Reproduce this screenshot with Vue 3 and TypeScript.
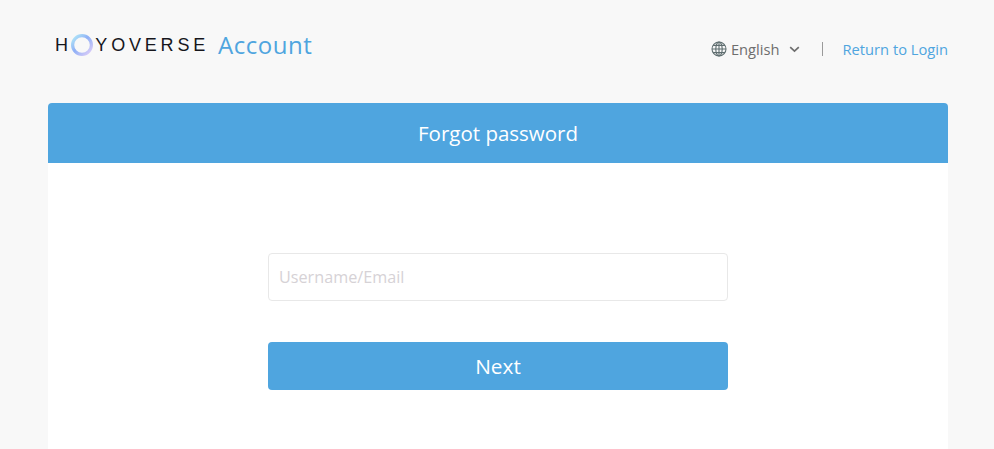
<script setup lang="ts">
const title: string = 'Forgot password'
</script>

<template>
  <div class="page">
    <header class="top">
      <div class="brand">
        <div class="logo" aria-label="HoYoverse">
          <span class="h">H</span>
          <svg class="ring" width="24" height="24" viewBox="0 0 24 24">
            <defs>
              <linearGradient id="ringGrad" x1="0" y1="0" x2="1" y2="1">
                <stop offset="0" stop-color="#b4ecf8" />
                <stop offset="0.45" stop-color="#8fb0f6" />
                <stop offset="1" stop-color="#e2cff8" />
              </linearGradient>
            </defs>
            <circle cx="12" cy="12" r="9.4" fill="none" stroke="url(#ringGrad)" stroke-width="3.2" />
          </svg>
          <span class="rest">YOVERSE</span>
        </div>
        <span class="account">Account</span>
      </div>
      <nav class="nav">
        <svg class="globe" width="16" height="16" viewBox="0 0 16 16" fill="none" stroke="#5f6e70" stroke-width="1.1">
          <circle cx="8" cy="8" r="7" />
          <ellipse cx="8" cy="8" rx="3.2" ry="7" />
          <path d="M8 1v14M1 8h14M2 4.4h12M2 11.6h12" />
        </svg>
        <span class="lang">English</span>
        <svg class="chev" width="11" height="7" viewBox="0 0 11 7" fill="none" stroke="#6e6e6e" stroke-width="1.7">
          <path d="M1.2 1.2l4.3 4 4.3-4" />
        </svg>
        <span class="sep"></span>
        <a class="link">Return to Login</a>
      </nav>
    </header>
    <main class="card">
      <h1 class="head">{{ title }}</h1>
      <form class="form" @submit.prevent>
        <input class="input" type="text" placeholder="Username/Email" />
        <button class="next" type="submit">Next</button>
      </form>
    </main>
  </div>
</template>

<style>
html, body { margin: 0; background: #f8f8f8; overflow: hidden; }
</style>

<style scoped>
.page {
  height: 449px;
  box-sizing: border-box;
  padding: 0 46px 0 48px;
  background: #f8f8f8;
  font-family: "Open Sans", "Noto Sans", sans-serif;
  overflow: hidden;
}
.top {
  height: 103px;
  display: flex;
  justify-content: space-between;
}
.brand {
  display: flex;
  align-items: center;
  height: 90px;
  padding-left: 7px;
}
.logo {
  display: flex;
  align-items: center;
  width: 154px;
  font-family: "Liberation Sans", sans-serif;
  font-size: 18px;
  font-weight: 400;
  color: #16161c;
}
.h { width: 17px; }
.ring { margin: 0 1px 0 0; flex: none; }
.rest { letter-spacing: 3.8px; white-space: nowrap; }
.account {
  margin-left: 9px;
  font-size: 24px;
  line-height: 30px;
  letter-spacing: 0.55px;
  color: #4fa5df;
}
.nav {
  display: flex;
  align-items: center;
  height: 98px;
  font-size: 14.7px;
}
.globe { margin-right: 4px; }
.lang { color: #6e6e6e; }
.chev { margin-left: 9px; }
.sep {
  width: 1px;
  height: 14px;
  margin: 0 20px 0 22px;
  background: #9a9a9a;
}
.link { color: #4fa5df; }
.card {
  width: 900px;
  height: 346px;
  background: #fff;
  border-radius: 4px 4px 0 0;
}
.head {
  margin: 0;
  height: 60px;
  line-height: 60px;
  text-align: center;
  font-size: 20.5px;
  font-weight: 400;
  color: #fff;
  background: #4fa5df;
  border-radius: 4px 4px 0 0;
}
.form {
  width: 460px;
  margin: 0 auto;
  padding-top: 90px;
  display: flex;
  flex-direction: column;
  gap: 41px;
}
.input {
  height: 48px;
  box-sizing: border-box;
  padding: 0 10px;
  border: 1px solid #e8e8e8;
  border-radius: 4px;
  outline: none;
  background: #fff;
  font-family: inherit;
  font-size: 16.2px;
}
.input::placeholder { color: #d6d2d6; opacity: 1; }
.next {
  height: 48px;
  border: 0;
  border-radius: 4px;
  background: #4fa5df;
  color: #fff;
  font-family: inherit;
  font-size: 20.8px;
}
</style>
